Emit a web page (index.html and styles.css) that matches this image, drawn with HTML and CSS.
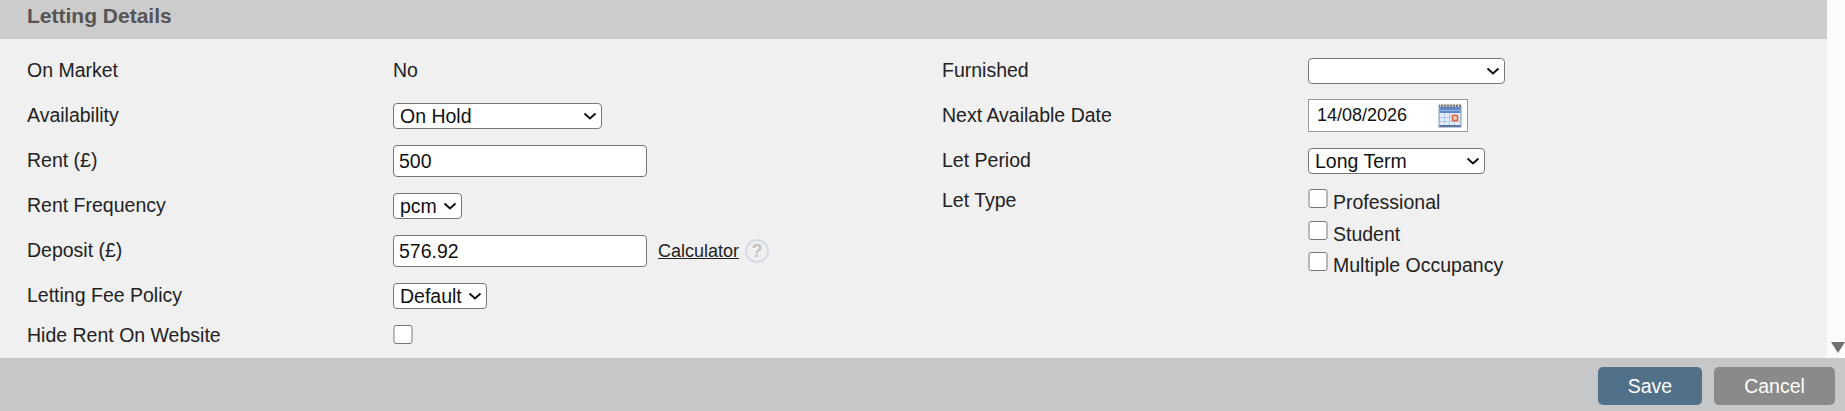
FILE: index.html
```html
<!DOCTYPE html>
<html lang="en">
<head>
  <meta charset="UTF-8">
  <meta name="viewport" content="width=device-width, initial-scale=1.0">
  <title>Letting Details</title>
  <link rel="stylesheet" href="styles.css">
</head>
<body>
  <div class="scroll-area">
    <main class="panel">
      <h2 class="panel-title">Letting Details</h2>
      <div class="columns">
        <div class="col col-left">
          <div class="field"><span class="label">On Market</span><span class="value">No</span></div>
          <div class="field">
            <label class="label label-up">Availability</label>
            <select class="sel sel-availability"><option>On Hold</option></select>
          </div>
          <div class="field">
            <label class="label label-up">Rent (£)</label>
            <input class="txt" type="text" value="500">
          </div>
          <div class="field">
            <label class="label">Rent Frequency</label>
            <select class="sel sel-frequency"><option>pcm</option></select>
          </div>
          <div class="field">
            <label class="label label-up">Deposit (£)</label>
            <input class="txt" type="text" value="576.92">
            <a class="calc-link" href="#">Calculator</a>
            <span class="help">?</span>
          </div>
          <div class="field">
            <label class="label label-up">Letting Fee Policy</label>
            <select class="sel sel-fee"><option>Default</option></select>
          </div>
          <div class="field">
            <label class="label">Hide Rent On Website</label>
            <input class="check check-hide" type="checkbox">
          </div>
        </div>

        <div class="col col-right">
          <div class="field">
            <label class="label">Furnished</label>
            <select class="sel sel-furnished"><option></option></select>
          </div>
          <div class="field">
            <label class="label">Next Available Date</label>
            <div class="date-box">
              <input class="date-input" type="text" value="14/08/2026">
              <svg class="cal-icon" width="24" height="24" viewBox="0 0 24 24">
                <rect x="1" y="2" width="22" height="21" fill="#e6ecf5" stroke="#7d90ab"/>
                <rect x="1" y="0.5" width="22" height="2.5" fill="#777"/>
                <path d="M2.5 0.5v2.5M5.5 0.5v2.5M8.5 0.5v2.5M11.5 0.5v2.5M14.5 0.5v2.5M17.5 0.5v2.5M20.5 0.5v2.5" stroke="#ddd"/>
                <rect x="1.5" y="3" width="21" height="6" fill="#5f86c6"/>
                <rect x="1.5" y="6" width="21" height="1" fill="#9db9e2"/>
                <path d="M6.5 9v12M11.5 9v12M16.5 9v12M2 13.5h20M2 17.5h20" stroke="#b4c8e6"/>
                <rect x="14.5" y="11.5" width="5" height="5" fill="#f3d3c4" stroke="#e2603c" stroke-width="1.5"/>
                <rect x="1.5" y="21" width="21" height="2" fill="#5a76a3"/>
              </svg>
            </div>
          </div>
          <div class="field">
            <label class="label">Let Period</label>
            <select class="sel sel-period"><option>Long Term</option></select>
          </div>
          <div class="field field-top">
            <label class="label label-type">Let Type</label>
            <div class="check-list">
              <label class="check-row"><input class="check" type="checkbox"><span>Professional</span></label>
              <label class="check-row"><input class="check" type="checkbox"><span>Student</span></label>
              <label class="check-row"><input class="check" type="checkbox"><span>Multiple Occupancy</span></label>
            </div>
          </div>
        </div>
      </div>
    </main>
    <div class="scrollbar"><span class="scroll-down"></span></div>
  </div>

  <footer class="actions">
    <button class="btn btn-save">Save</button>
    <button class="btn btn-cancel">Cancel</button>
  </footer>
</body>
</html>
```

FILE: styles.css
```css
body {
  margin: 0;
  height: 411px;
  overflow: hidden;
  font-family: "Liberation Sans", Arial, sans-serif;
  font-size: 19.5px;
  color: #222;
  background: #f0f0f0;
}
.scroll-area {
  display: flex;
  height: 358px;
}
.panel {
  flex: 1;
  background: #f0f0f0;
}
.panel-title {
  margin: 0;
  height: 39px;
  padding-left: 27px;
  background: #cccccc;
  color: #555;
  font-size: 21px;
  font-weight: bold;
  line-height: 32px;
}
.scrollbar {
  width: 18px;
  background: #fbfbfb;
  display: flex;
  flex-direction: column;
  justify-content: flex-end;
  align-items: flex-end;
  padding-bottom: 5px;
  box-sizing: border-box;
}
.scroll-down {
  width: 0;
  height: 0;
  border-left: 7px solid transparent;
  border-right: 7px solid transparent;
  border-top: 11px solid #707070;
}
.columns {
  display: flex;
  padding: 8px 0 0 27px;
}
.col {
  display: grid;
}
.col-left {
  width: 915px;
  grid-template-rows: 46px 46px 44px 45px 46px 44px 35px;
}
.col-right {
  grid-template-rows: 46px 45px 45px auto;
}
.field {
  display: flex;
  align-items: center;
}
.field-top {
  align-items: flex-start;
}
.label {
  width: 366px;
  flex: none;
}
.label-up {
  margin-bottom: 2px;
}
.label-type {
  margin-top: 6px;
}
.sel {
  appearance: none;
  height: 26px;
  box-sizing: border-box;
  font-family: inherit;
  font-size: 19.5px;
  color: #111;
  border: 1px solid #767676;
  border-radius: 4px;
  padding: 0 0 0 6px;
  background: #fff url("data:image/svg+xml,%3Csvg xmlns='http://www.w3.org/2000/svg' width='14' height='8'%3E%3Cpath d='M1.5 1.5L7 6.5L12.5 1.5' fill='none' stroke='%23111' stroke-width='2'/%3E%3C/svg%3E") no-repeat right 4px center;
}
.sel-availability { width: 209px; }
.sel-frequency { width: 69px; }
.sel-fee { width: 94px; }
.sel-furnished { width: 197px; margin-top: 2px; }
.sel-period { width: 177px; margin-top: 1px; }
.txt {
  width: 254px;
  height: 32px;
  box-sizing: border-box;
  padding: 0 5px;
  font-family: inherit;
  font-size: 19.5px;
  color: #111;
  background: #fff;
  border: 1px solid #767676;
  border-radius: 4px;
}
.calc-link {
  margin-left: 11px;
  color: #222;
  font-size: 18px;
}
.help {
  width: 24px;
  height: 24px;
  margin-left: 6px;
  box-sizing: border-box;
  border: 2px solid #d5dbe6;
  border-radius: 50%;
  color: #c2c2c2;
  font-size: 18px;
  font-weight: bold;
  line-height: 20px;
  text-align: center;
}
.check {
  width: 20px;
  height: 19px;
  margin: 0;
}
.check-hide {
  margin-bottom: 3px;
}
.date-box {
  display: flex;
  align-items: center;
  width: 160px;
  height: 33px;
  box-sizing: border-box;
  border: 1px solid #999;
  background: #fff;
}
.date-input {
  width: 129px;
  box-sizing: border-box;
  border: none;
  outline: none;
  padding: 0 0 0 8px;
  font-family: inherit;
  font-size: 18px;
  color: #111;
  background: transparent;
}
.check-list {
  display: flex;
  flex-direction: column;
  gap: 9.5px;
  margin-top: 6px;
}
.check-row {
  display: flex;
  align-items: flex-start;
  gap: 5px;
  height: 22px;
}
.check-row span {
  margin-top: 2px;
}
.actions {
  display: flex;
  justify-content: flex-end;
  gap: 12px;
  height: 53px;
  box-sizing: border-box;
  padding: 9px 10px 0 0;
  background: #c6c7c9;
}
.btn {
  height: 38px;
  border: none;
  border-radius: 5px;
  color: #fff;
  font-family: inherit;
  font-size: 19.5px;
}
.btn-save {
  width: 104px;
  background: #527088;
}
.btn-cancel {
  width: 121px;
  background: #8a8a8a;
}
```
